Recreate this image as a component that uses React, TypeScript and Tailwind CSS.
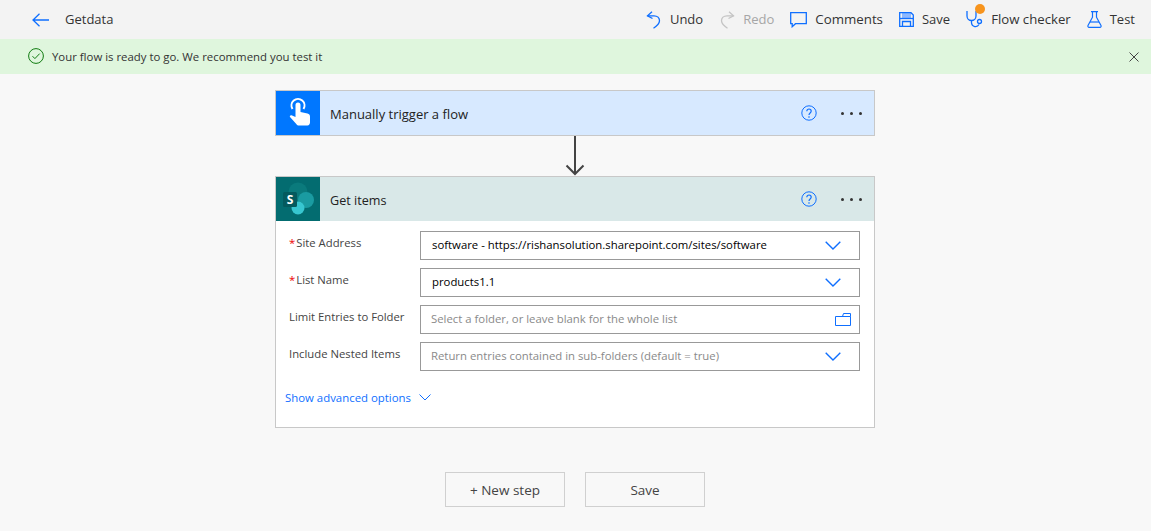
import React from 'react';

const BLUE = '#0f6fff';

const UndoIcon = ({ color = BLUE, flip = false }: { color?: string; flip?: boolean }) => (
  <svg width="16" height="18" viewBox="0 0 16 18" fill="none" stroke={color} strokeWidth="1.3" className={flip ? '-scale-x-100' : ''}>
    <path d="M6 .8 1.500 4.800 6.500 7.500" />
    <path d="M1.500 4.800H8c3.400 0 5.500 2.300 5.500 5 0 3-2.300 5-6 7.400" />
  </svg>
);

const Chevron = () => (
  <svg width="16" height="9" viewBox="0 0 16 9" fill="none" stroke={BLUE} strokeWidth="1.4" className="mr-[-1px]">
    <path d="M.7.8 8 8 15.3.8" />
  </svg>
);

const Help = () => (
  <svg width="16" height="16" viewBox="0 0 16 16" fill="none" stroke={BLUE} strokeWidth="1">
    <circle cx="8" cy="8" r="7.2" />
    <path d="M5.800 6.200C5.800 4.900 6.800 4 8 4s2.200.9 2.200 2.100c0 1.900-2.200 1.800-2.200 3.800" strokeWidth="1.2" />
    <circle cx="8" cy="12" r=".8" fill={BLUE} stroke="none" />
  </svg>
);

const Dots = () => (
  <div className="flex gap-[6px]">
    <span className="h-[3px] w-[3px] rounded-full bg-[#333]" />
    <span className="h-[3px] w-[3px] rounded-full bg-[#333]" />
    <span className="h-[3px] w-[3px] rounded-full bg-[#333]" />
  </div>
);

const HandIcon = () => (
  <svg width="44" height="44" viewBox="0 0 44 44">
    <path d="M16.500 18a6.500 6.500 0 1 1 11 0" fill="none" stroke="white" strokeWidth="2" />
    <path
      fill="white"
      d="M19.500 14a2.500 2.500 0 0 1 5 0v7l7 1.500c1.600.4 2.500 1.500 2.500 3v6c0 1.500-1 3-2.500 3H23c-1.200 0-2-.6-2.700-1.600L14 26c-.6-.9.300-2 1.500-1.800l4 1.800z"
    />
  </svg>
);

const SharePointIcon = () => (
  <svg width="44" height="44" viewBox="0 0 44 44">
    <circle cx="22" cy="15" r="9.500" fill="#0a7a7c" />
    <circle cx="30" cy="23" r="8" fill="#1a9ba1" />
    <circle cx="22" cy="31" r="6.500" fill="#37c6d0" />
    <rect x="7" y="15" width="14" height="15" rx="1.500" fill="#045a5e" />
    <text x="14" y="27" textAnchor="middle" fontSize="12" fontWeight="700" fill="white" fontFamily="'Open Sans', sans-serif">S</text>
  </svg>
);

const ToolButton = ({ icon, label, disabled, className = '' }: { icon: React.ReactNode; label: string; disabled?: boolean; className?: string }) => (
  <div className="flex items-center gap-[8px]">
    {icon}
    <span className={`${disabled ? 'text-[#a6a6a6]' : 'text-[#333]'} ${className}`}>{label}</span>
  </div>
);

const Field = ({ label, required, value, placeholder, icon }: { label: string; required?: boolean; value?: string; placeholder?: string; icon: React.ReactNode }) => (
  <div className="flex h-[29px]">
    <div className="w-[131px] shrink-0 pt-[4px] text-[11.3px] text-[#444]">
      {required && <span className="mr-[1px] text-[#e00]">*</span>}
      {label}
    </div>
    <div className="flex w-[440px] items-center justify-between border border-[#999] bg-white pb-[1px] pl-[11px] pr-[19px] text-[11.35px]">
      {value ? <span className="text-black">{value}</span> : <span className="-ml-[1px] text-[#8a8a8a]">{placeholder}</span>}
      {icon}
    </div>
  </div>
);

export default function App() {
  return (
    <div className="flex h-[531px] flex-col overflow-hidden bg-[#f8f8f8] font-['Open_Sans',sans-serif] text-[13px]">
      <header className="flex h-[39px] shrink-0 items-center justify-between bg-[#f3f3f3] pl-[32px] pr-[16px]">
        <div className="flex items-center gap-[16px]">
          <svg width="17" height="14" viewBox="0 0 17 14" fill="none" stroke={BLUE} strokeWidth="1.3">
            <path d="M7.500.7 1 7l6.500 6.300M1 7h16" />
          </svg>
          <span className="text-[#333]">Getdata</span>
        </div>
        <div className="flex items-center gap-[16px]">
          <ToolButton icon={<UndoIcon />} label="Undo" />
          <ToolButton icon={<UndoIcon color="#c4c4c4" flip />} label="Redo" disabled />
          <ToolButton
            label="Comments"
            className="text-[13.3px]"
            icon={
              <svg width="17" height="16" viewBox="0 0 17 16" fill="none" stroke={BLUE} strokeWidth="1.3">
                <path d="M.7.700h15.600v11H5.500l-3.300 3v-3H.7z" />
              </svg>
            }
          />
          <ToolButton
            label="Save"
            icon={
              <svg width="15" height="15" viewBox="0 0 15 15" fill="none" stroke={BLUE} strokeWidth="1.3">
                <rect x="3" y="1" width="9" height="5" fill="#8db8ff" stroke="none" />
                <path d="M.7.700h11.300l2.300 2.300v11.300H.7z" />
                <path d="M1 6.500h13" />
                <path d="M3.500 14V9.500h8V14" />
              </svg>
            }
          />
          <div className="relative">
            <ToolButton
              label="Flow checker"
              className="text-[13.2px]"
              icon={
                <svg width="17" height="18" viewBox="0 0 17 18" fill="none" stroke={BLUE} strokeWidth="1.3">
                  <path d="M1 1v5a4.500 4.500 0 0 0 9 0V1" />
                  <path d="M5.500 10.500V13a4 4 0 0 0 7.500 1.500" />
                  <circle cx="13.500" cy="11.500" r="2" />
                </svg>
              }
            />
            <span className="absolute left-[9px] top-[-6px] h-[10px] w-[10px] rounded-full bg-[#f7941d]" />
          </div>
          <ToolButton
            label="Test"
            icon={
              <svg width="15" height="17" viewBox="0 0 15 17" fill="none" stroke={BLUE} strokeWidth="1.2">
                <path d="M4 .7h7M5.500.7v5.500L1 14.500c-.4.900.1 1.800 1.100 1.800h10.800c1 0 1.500-.9 1.100-1.800L9.500 6.200V.7" />
                <path d="M3 11h9" />
              </svg>
            }
          />
        </div>
      </header>

      <div className="flex h-[35px] shrink-0 items-center justify-between bg-[#dff6dd] pl-[28px] pr-[12px]">
        <div className="flex items-center gap-[8px] text-[11.4px] text-[#333]">
          <svg width="16" height="16" viewBox="0 0 16 16" fill="none" stroke="#107c10" strokeWidth="1">
            <circle cx="8" cy="8" r="7.4" />
            <path d="m4.500 8.200 2.400 2.400 4.800-5" />
          </svg>
          <span>Your flow is ready to go. We recommend you test it</span>
        </div>
        <svg width="10" height="10" viewBox="0 0 10 10" stroke="#444" strokeWidth="1">
          <path d="m.5.500 9 9m0-9-9 9" />
        </svg>
      </div>

      <main className="flex flex-col items-center pr-[1px] pt-[16px]">
        <div className="flex h-[46px] w-[600px] items-center border border-[#c8c8c8] bg-[#d7e9ff]">
          <div className="h-[44px] w-[44px] shrink-0 bg-[#0077ff]">
            <HandIcon />
          </div>
          <span className="ml-[10px] flex-1 pt-[3px] text-[#222]">Manually trigger a flow</span>
          <Help />
          <div className="ml-[24px] mr-[12px]">
            <Dots />
          </div>
        </div>

        <svg width="20" height="40" viewBox="0 0 20 40" fill="none" stroke="#444" strokeWidth="2">
          <path d="M10 0v38M1.500 29.500 10 38l8.500-8.500" />
        </svg>

        <div className="h-[252px] w-[600px] border border-[#c8c8c8] bg-white">
          <div className="flex h-[44px] items-center bg-[#d9e8e8]">
            <div className="h-[44px] w-[44px] shrink-0 bg-[#036c70]">
              <SharePointIcon />
            </div>
            <span className="ml-[10px] flex-1 pt-[4px] text-[12.6px] text-[#222]">Get items</span>
            <Help />
            <div className="ml-[24px] mr-[12px]">
              <Dots />
            </div>
          </div>
          <div className="flex flex-col gap-[8px] pl-[13px] pt-[10px]">
            <Field required label="Site Address" value="software - https://rishansolution.sharepoint.com/sites/software" icon={<Chevron />} />
            <Field required label="List Name" value="products1.1" icon={<Chevron />} />
            <Field
              label="Limit Entries to Folder"
              placeholder="Select a folder, or leave blank for the whole list"
              icon={
                <svg width="16" height="13" viewBox="0 0 16 13" fill="none" stroke={BLUE} strokeWidth="1" className="-mr-[11px]">
                  <path d="M.5 3.500h15v9H.5zM7.500 3.500 8.500.5h7v3" />
                </svg>
              }
            />
            <Field label="Include Nested Items" placeholder="Return entries contained in sub-folders (default = true)" icon={<Chevron />} />
          </div>
          <div className="ml-[9px] mt-[18px] flex items-center gap-[8px] text-[11.4px] text-[#0f6fff]">
            <span>Show advanced options</span>
            <svg width="12" height="7" viewBox="0 0 12 7" fill="none" stroke={BLUE} strokeWidth="1">
              <path d="m.5.500 5.500 5.500L11.500.500" />
            </svg>
          </div>
        </div>

        <div className="mt-[44px] flex gap-[20px]">
          <button className="h-[35px] w-[120px] border border-[#d0d0d0] pt-[2px] text-[13.5px] text-[#444]">+ New step</button>
          <button className="h-[35px] w-[120px] border border-[#d0d0d0] pt-[2px] text-[13.5px] text-[#444]">Save</button>
        </div>
      </main>
    </div>
  );
}
